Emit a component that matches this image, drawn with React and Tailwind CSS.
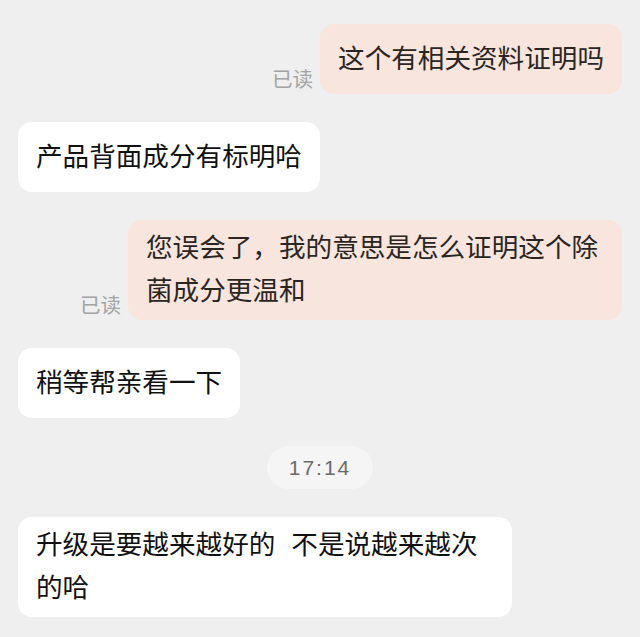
import React from "react";

const font = { fontFamily: '"Liberation Sans", "Noto Sans CJK SC", sans-serif' };

function Right({ children }) {
  return (
    <div className="flex justify-end items-end pr-[18px]">
      <span className="text-[20.5px] leading-[24px] text-[#a3a3a3] mr-[7px] mb-[2px]">已读</span>
      <div className="max-w-[494px] min-h-[70px] flex items-center rounded-[14px] bg-[#f7e5de] px-[18px] py-[7px] text-[26.6px] leading-[43px] text-[#2b2522]">
        <span>{children}</span>
      </div>
    </div>
  );
}

function Left({ children }) {
  return (
    <div className="flex justify-start pl-[18px]">
      <div className="max-w-[494px] min-h-[70px] flex items-center rounded-[14px] bg-white px-[18px] py-[7px] text-[26.6px] leading-[43px] text-[#111111]">
        <span>{children}</span>
      </div>
    </div>
  );
}

export default function App() {
  return (
    <div style={font} className="w-[640px] h-[637px] overflow-hidden bg-[#efefef] pt-[24px] flex flex-col gap-[28px]">
      <Right>这个有相关资料证明吗</Right>
      <Left>产品背面成分有标明哈</Left>
      <Right>您误会了，我的意思是怎么证明这个除菌成分更温和</Right>
      <Left>稍等帮亲看一下</Left>
      <div className="flex justify-center">
        <div className="w-[106px] h-[43px] rounded-full bg-[#f5f5f5] flex items-center justify-center text-[21px] tracking-[2px] text-[#6a6a6a]">
          17:14
        </div>
      </div>
      <Left>
        升级是要越来越好的<span className="inline-block w-[16px]"></span>不是说越来越次的哈
      </Left>
    </div>
  );
}
